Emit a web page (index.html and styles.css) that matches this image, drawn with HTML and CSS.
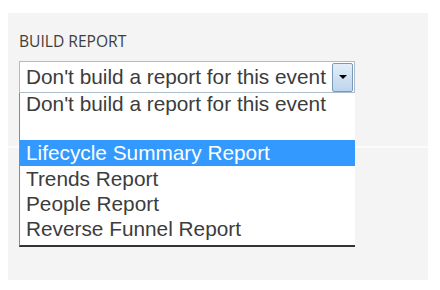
FILE: index.html
```html
<!DOCTYPE html>
<html lang="en">
<head>
    <meta charset="UTF-8">
    <meta name="viewport" content="width=device-width, initial-scale=1.0">
    <title>Build Report</title>
    <link rel="stylesheet" href="styles.css">
</head>
<body>
    <div class="panel">
        <div class="section">
            <div class="label">Build Report</div>
            <div class="field">
                <div class="select">
                    <span class="value">Don't build a report for this event</span>
                    <span class="arrow-btn"><span class="arrow"></span></span>
                </div>
                <!-- open dropdown list -->
                <ul class="options">
                    <li class="first">Don't build a report for this event</li>
                    <li>&nbsp;</li>
                    <li class="active">Lifecycle Summary Report</li>
                    <li>Trends Report</li>
                    <li>People Report</li>
                    <li>Reverse Funnel Report</li>
                </ul>
            </div>
        </div>
    </div>
</body>
</html>
```

FILE: styles.css
```css
body {
    margin: 0;
    background-color: #fff;
}
.panel {
    margin: 13px 0 0 8px;
    width: 420px;
    height: 267px;
    background-color: #f4f4f4;
}
.section {
    height: 115px;
    padding: 18px 11px 0;
    border-bottom: 2px solid #fbfbfb;
}
.label {
    font-family: "Open Sans", sans-serif;
    font-size: 15.6px;
    line-height: 20px;
    color: #3e3e3e;
    text-transform: uppercase;
    margin-bottom: 10px;
}
.field {
    position: relative;
    width: 336px;
}
.select {
    display: flex;
    align-items: center;
    justify-content: space-between;
    height: 30px;
    border: 1px solid #abbccc;
    background: #fff;
    padding-left: 6px;
    font-family: "Liberation Sans", Arial, sans-serif;
    font-size: 20.8px;
    color: #3c3c3c;
}
.arrow-btn {
    display: flex;
    align-items: center;
    justify-content: center;
    width: 19px;
    height: 27px;
    margin-right: 1px;
    border: 1px solid #7b9ab8;
    border-radius: 2px;
    background: linear-gradient(#e3eef8, #bcd5ec);
}
.arrow {
    width: 0;
    height: 0;
    border-left: 4px solid transparent;
    border-right: 4px solid transparent;
    border-top: 4px solid #000;
}
.options {
    position: absolute;
    top: 32px;
    left: 0;
    width: 335px;
    margin: 0;
    padding: 0 0 4px;
    list-style: none;
    background: #fff;
    border-left: 1px solid #8a8a8a;
    border-bottom: 2px solid #333;
    font-family: "Liberation Sans", Arial, sans-serif;
    font-size: 20.8px;
    color: #3c3c3c;
}
.options li {
    height: 25px;
    line-height: 25px;
    padding-left: 6px;
    white-space: nowrap;
}
.options li.first {
    height: 22px;
    line-height: 22px;
}
.options li.active {
    height: 26px;
    line-height: 26px;
    background-color: #3399ff;
    color: #fff;
}
```
